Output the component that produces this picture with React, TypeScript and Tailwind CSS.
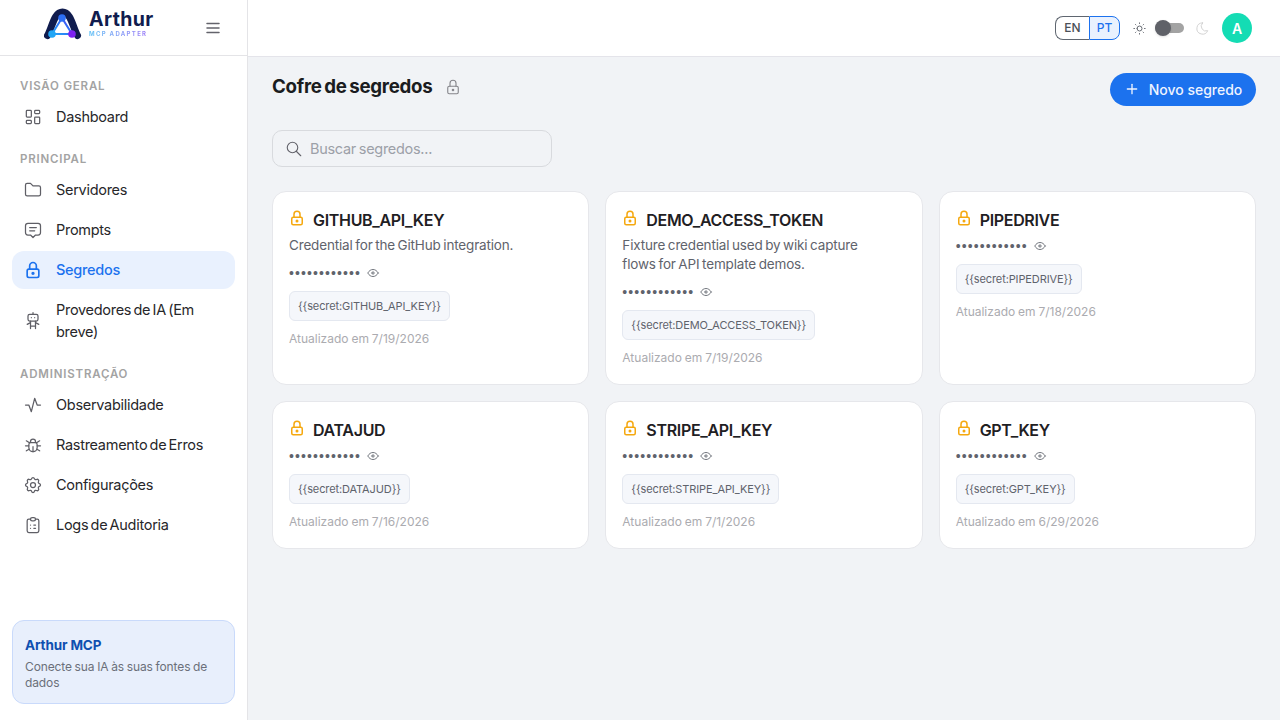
import type { ComponentType, ReactNode } from "react";
import {
  TbActivity,
  TbBug,
  TbClipboardList,
  TbEye,
  TbFolder,
  TbLayoutDashboard,
  TbLock,
  TbMenu2,
  TbMessage2,
  TbMoon,
  TbPlus,
  TbRobot,
  TbSearch,
  TbSettings,
  TbSun,
} from "react-icons/tb";

type Icon = ComponentType<{ className?: string; strokeWidth?: number }>;

function SectionLabel({ children, first }: { children: ReactNode; first?: boolean }) {
  return (
    <div
      className={`flex h-[20px] items-center px-2 pt-[1px] text-[11.5px] font-semibold tracking-[0.07em] text-[#a3a3a3] ${
        first ? "" : "mt-[11px]"
      }`}
    >
      {children}
    </div>
  );
}

function NavItem({
  icon: IconCmp,
  label,
  active,
  tall,
}: {
  icon: Icon;
  label: string;
  active?: boolean;
  tall?: boolean;
}) {
  return (
    <div
      className={`flex items-center rounded-xl px-[11px] text-[14.5px] tracking-[-0.02em] [word-spacing:-1.5px] ${
        tall ? "h-[60px] leading-[22px]" : "h-[38px]"
      } ${active ? "bg-[#e9f1fe] font-medium text-[#1c72ee]" : "text-[#27272a]"}`}
    >
      <span className={`flex w-[33px] shrink-0 ${active ? "text-[#1c72ee]" : "text-[#5f5f66]"}`}>
        <IconCmp className="size-[20px]" strokeWidth={active ? 2 : 1.5} />
      </span>
      <span>{label}</span>
    </div>
  );
}

function Logo() {
  return (
    <div className="mb-[8px] flex items-center gap-[7px]">
      <svg viewBox="0 0 38 32" className="h-[32px] w-[38px]" aria-hidden>
        <defs>
          <linearGradient id="tri" x1="0" y1="1" x2="1" y2="0">
            <stop offset="0" stopColor="#25a5f5" />
            <stop offset="0.6" stopColor="#2f6cf6" />
            <stop offset="1" stopColor="#7c2cf0" />
          </linearGradient>
        </defs>
        <path
          d="M3.5 27.5 C8 20 10 4 18.5 4 C27 4 29 20 33.5 27.5"
          fill="none"
          stroke="#101c4e"
          strokeWidth="7"
          strokeLinecap="round"
        />
        <path d="M18 10 L8 26 L28 26 Z" fill="#ffffff" stroke="url(#tri)" strokeWidth="2" />
        <circle cx="18" cy="10" r="3.8" fill="#2d6ff5" />
        <circle cx="8" cy="26" r="3.8" fill="#22a6f5" />
        <circle cx="28" cy="26" r="3.8" fill="#7c22f2" />
      </svg>
      <div className="flex flex-col items-start">
        <span className="text-[19.5px] leading-[16px] font-bold tracking-[0.02em] text-[#101c4e]">Arthur</span>
        <span className="mt-[3px] bg-gradient-to-r from-[#5cc0f5] to-[#9a7cf7] bg-clip-text text-[6px] leading-[7px] font-bold tracking-[0.22em] text-transparent">
          MCP ADAPTER
        </span>
      </div>
    </div>
  );
}

function Sidebar() {
  return (
    <aside className="flex h-full w-[248px] shrink-0 flex-col border-r border-[#e4e4e7] bg-white">
      <div className="flex h-[56px] shrink-0 items-center border-b border-[#e4e4e7] pr-[25px] pl-[44px]">
        <Logo />
        <TbMenu2 className="ml-auto size-[18px] text-[#63636b]" />
      </div>
      <nav className="flex flex-1 flex-col gap-[2px] px-3 pt-[20px]">
        <SectionLabel first>VISÃO GERAL</SectionLabel>
        <NavItem icon={TbLayoutDashboard} label="Dashboard" />
        <SectionLabel>PRINCIPAL</SectionLabel>
        <NavItem icon={TbFolder} label="Servidores" />
        <NavItem icon={TbMessage2} label="Prompts" />
        <NavItem icon={TbLock} label="Segredos" active />
        <NavItem icon={TbRobot} label="Provedores de IA (Em breve)" tall />
        <SectionLabel>ADMINISTRAÇÃO</SectionLabel>
        <NavItem icon={TbActivity} label="Observabilidade" />
        <NavItem icon={TbBug} label="Rastreamento de Erros" />
        <NavItem icon={TbSettings} label="Configurações" />
        <NavItem icon={TbClipboardList} label="Logs de Auditoria" />
      </nav>
      <div className="mx-3 mb-4 h-[84px] rounded-xl border border-[#c9dafb] bg-[#e8effc] px-3 pt-[15px]">
        <div className="text-[13.5px] leading-[18px] font-bold tracking-[-0.01em] text-[#0f4fb0]">Arthur MCP</div>
        <div className="mt-[5px] text-[12px] leading-[16px] tracking-[-0.01em] text-[#6b6f7a] [word-spacing:-0.5px]">
          Conecte sua IA às suas fontes de dados
        </div>
      </div>
    </aside>
  );
}

function Topbar() {
  return (
    <header className="flex h-[57px] shrink-0 items-center justify-end border-b border-[#e4e4ea] bg-white pr-[28px]">
      <div className="flex h-[24px] text-[12px] font-medium">
        <span className="flex w-[34px] items-center justify-center rounded-l-lg border border-r-0 border-[#5f6670] text-[#4b5058]">EN</span>
        <span className="flex w-[31px] items-center justify-center rounded-r-lg border border-[#1c72ee] bg-[#e9f1fe] text-[#1c72ee]">PT</span>
      </div>
      <TbSun className="ml-[12px] size-[15px] text-[#5b5f66]" strokeWidth={1.5} />
      <div className="relative ml-[8px] h-[10px] w-[29px] rounded-full bg-[#a3a3a3]">
        <span className="absolute top-[-3px] left-0 size-[16px] rounded-full bg-[#5f6168] shadow" />
      </div>
      <TbMoon className="ml-[11px] size-[15px] text-[#d0d0d0]" strokeWidth={1.5} />
      <span className="ml-[12px] flex size-[30px] items-center justify-center rounded-full bg-[#14dcb4] text-[14px] font-semibold text-white">A</span>
    </header>
  );
}

type Secret = {
  name: string;
  description?: string[];
  updated: string;
};

const secrets: Secret[] = [
  { name: "GITHUB_API_KEY", description: ["Credential for the GitHub integration."], updated: "7/19/2026" },
  {
    name: "DEMO_ACCESS_TOKEN",
    description: ["Fixture credential used by wiki capture", "flows for API template demos."],
    updated: "7/19/2026",
  },
  { name: "PIPEDRIVE", updated: "7/18/2026" },
  { name: "DATAJUD", updated: "7/16/2026" },
  { name: "STRIPE_API_KEY", updated: "7/1/2026" },
  { name: "GPT_KEY", updated: "6/29/2026" },
];

function SecretCard({ secret }: { secret: Secret }) {
  return (
    <div className="rounded-[14px] border border-[#e6e7eb] bg-white px-4 pt-[16px] pb-[18px]">
      <div className="flex h-[24px] items-center">
        <TbLock className="mt-[-4px] ml-[-1px] size-[18px] text-[#f5a80e]" />
        <span className="ml-[7px] text-[16px] font-semibold tracking-[-0.02em] text-[#1f2023]">{secret.name}</span>
      </div>
      {/* mb colapsa com o mt-[5px] da linha de pontos */}
      {secret.description && (
        <div className="mt-[4px] mb-[9px] text-[13.5px] leading-[19px] tracking-[-0.012em] text-[#5f636c] [word-spacing:-1px]">
          {secret.description.map((line) => (
            <div key={line}>{line}</div>
          ))}
        </div>
      )}
      <div className="mt-[5px] flex h-[18px] items-center">
        <span className="text-[14px] leading-none tracking-[1.1px] text-[#5f636c] [font-family:'Liberation_Sans',sans-serif]">••••••••••••</span>
        <TbEye className="ml-[5px] size-[14px] text-[#5f636c]" strokeWidth={1.5} />
      </div>
      <span className="mt-[9px] inline-flex h-[30px] items-center rounded-md border border-[#e4e8f0] bg-[#f5f7fb] px-2 text-[11px] tracking-[-0.01em] text-[#5f636c]">
        {`{{secret:${secret.name}}}`}
      </span>
      <div className="mt-[10px] text-[12px] leading-[16px] text-[#ababb0] [word-spacing:-0.5px]">Atualizado em {secret.updated}</div>
    </div>
  );
}

export default function App() {
  return (
    <div className="flex h-screen w-full overflow-hidden bg-[#f1f3f6] font-['Inter',sans-serif]">
      <Sidebar />
      <div className="flex min-w-0 flex-1 flex-col">
        <Topbar />
        <main className="flex flex-col px-6 pt-4">
          <div className="flex h-[32px] items-start justify-between">
            <div className="flex h-[28px] items-center">
              <h1 className="text-[18.7px] font-bold tracking-[-0.015em] text-[#1a1c20] [word-spacing:-1.5px]">Cofre de segredos</h1>
              <TbLock className="ml-[12px] size-[18px] text-[#85858b]" strokeWidth={1.5} />
            </div>
            <button
              type="button"
              className="flex h-[33px] w-[146px] items-center justify-center gap-[9px] rounded-full bg-[#1c72ee] pb-[1px] text-[14px] font-medium text-[#eef4ff]"
            >
              <TbPlus className="size-[16px]" />
              Novo segredo
            </button>
          </div>
          <div className="mt-[25px] flex h-[37px] w-[280px] items-center rounded-[10px] border border-[#d8dade] pl-[12px]">
            <TbSearch className="size-[18px] text-[#63636b]" strokeWidth={1.5} />
            <span className="ml-[7px] text-[14.5px] tracking-[-0.02em] text-[#9ca0a8] [word-spacing:-1px]">Buscar segredos...</span>
          </div>
          <div className="mt-[24px] grid grid-cols-3 gap-4">
            {secrets.map((s) => (
              <SecretCard key={s.name} secret={s} />
            ))}
          </div>
        </main>
      </div>
    </div>
  );
}
